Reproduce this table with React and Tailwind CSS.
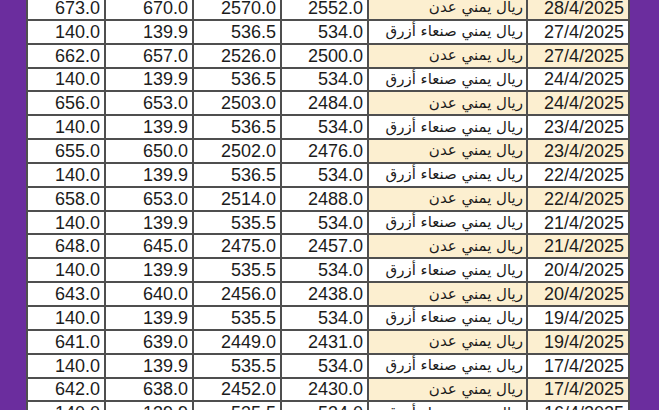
const ADEN = "ريال يمني عدن";
const SANAA = "ريال يمني صنعاء أزرق";

const rows = [
  ["673.0", "670.0", "2570.0", "2552.0", ADEN, "28/4/2025"],
  ["140.0", "139.9", "536.5", "534.0", SANAA, "27/4/2025"],
  ["662.0", "657.0", "2526.0", "2500.0", ADEN, "27/4/2025"],
  ["140.0", "139.9", "536.5", "534.0", SANAA, "24/4/2025"],
  ["656.0", "653.0", "2503.0", "2484.0", ADEN, "24/4/2025"],
  ["140.0", "139.9", "536.5", "534.0", SANAA, "23/4/2025"],
  ["655.0", "650.0", "2502.0", "2476.0", ADEN, "23/4/2025"],
  ["140.0", "139.9", "536.5", "534.0", SANAA, "22/4/2025"],
  ["658.0", "653.0", "2514.0", "2488.0", ADEN, "22/4/2025"],
  ["140.0", "139.9", "535.5", "534.0", SANAA, "21/4/2025"],
  ["648.0", "645.0", "2475.0", "2457.0", ADEN, "21/4/2025"],
  ["140.0", "139.9", "535.5", "534.0", SANAA, "20/4/2025"],
  ["643.0", "640.0", "2456.0", "2438.0", ADEN, "20/4/2025"],
  ["140.0", "139.9", "535.5", "534.0", SANAA, "19/4/2025"],
  ["641.0", "639.0", "2449.0", "2431.0", ADEN, "19/4/2025"],
  ["140.0", "139.9", "535.5", "534.0", SANAA, "17/4/2025"],
  ["642.0", "638.0", "2452.0", "2430.0", ADEN, "17/4/2025"],
  ["140.0", "139.9", "535.5", "534.0", SANAA, "16/4/2025"],
];

function Row({ r }) {
  const aden = r[4] === ADEN;
  const tint = aden ? "bg-[#fcefd0]" : "bg-white";
  return (
    <>
      {r.slice(0, 4).map((v, i) => (
        <div key={i} className="bg-white h-[21.85px] flex items-center justify-end pr-[4px] text-[18px] leading-none">
          {v}
        </div>
      ))}
      <div
        dir="rtl"
        className={`${tint} h-[21.85px] flex items-center justify-start pr-[3px] text-[15px] leading-none font-['DejaVu_Sans',sans-serif]`}
      >
        {r[4]}
      </div>
      <div className={`${tint} h-[21.85px] flex items-center justify-end pr-[4px] text-[18px] leading-none`}>
        {r[5]}
      </div>
    </>
  );
}

export default function App() {
  return (
    <div className="w-[659px] h-[410px] overflow-hidden bg-[#6b2d9e] flex items-start pl-[26px] font-['Liberation_Sans',Arial,sans-serif] text-[#1c1c1c]">
      <div className="mt-[-5px] grid grid-cols-[76px_86px_86px_85px_157px_100px] gap-[2px] p-[2px] bg-[#4f4f4f]">
        {rows.map((r, i) => (
          <Row key={i} r={r} />
        ))}
      </div>
    </div>
  );
}
